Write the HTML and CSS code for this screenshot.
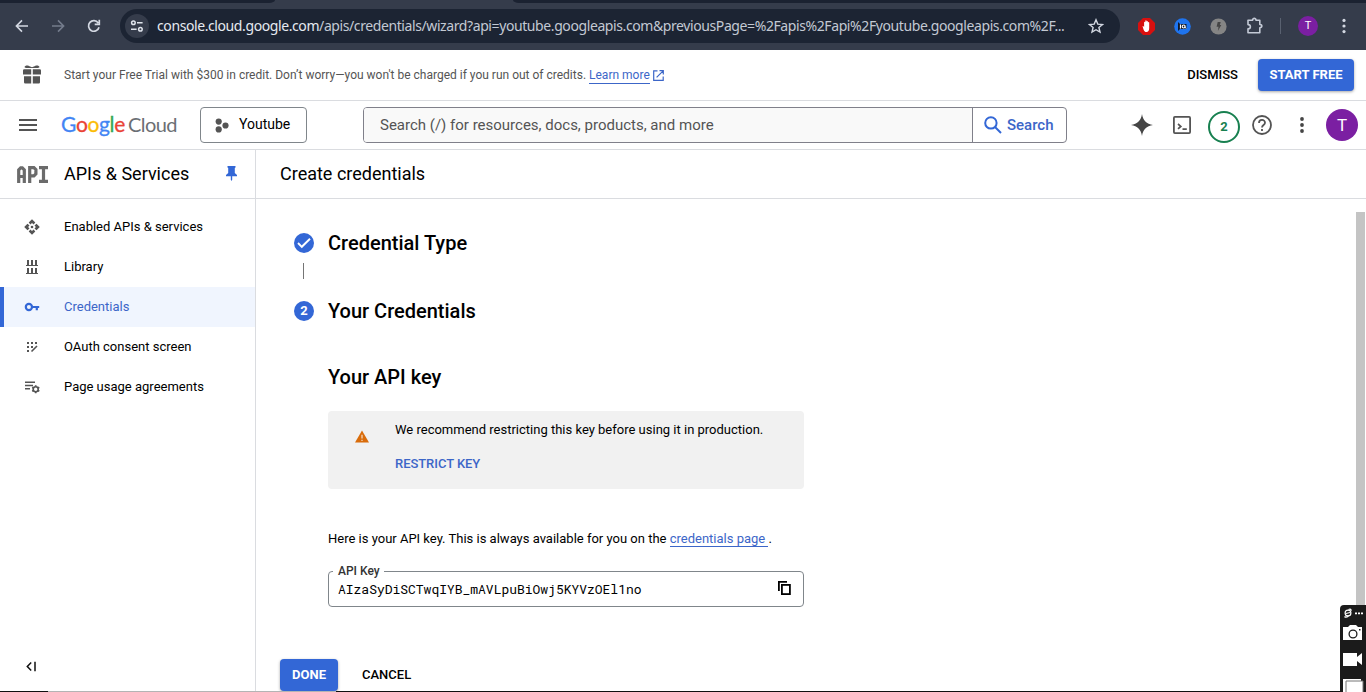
FILE: index.html
```html
<!DOCTYPE html>
<html lang="en">
<head>
<meta charset="utf-8">
<title>Create credentials – APIs &amp; Services</title>
<link rel="stylesheet" href="styles.css">
</head>
<body>
<div class="browser">
  <div class="tabs"><div class="tabs-left"></div><div class="tabs-right"></div></div>
  <div class="toolbar">
    <svg class="nav-back" width="16" height="16" viewBox="0 0 16 16" fill="none" stroke="#d3d8e2" stroke-width="1.6"><path d="M14 8H2.6M8 2.4 2.4 8 8 13.6"/></svg>
    <svg class="nav-fwd" width="16" height="16" viewBox="0 0 16 16" fill="none" stroke="#747c8c" stroke-width="1.6"><path d="M2 8h11.4M8 2.4 13.6 8 8 13.6"/></svg>
    <svg class="nav-reload" width="16" height="16" viewBox="0 0 16 16" fill="none" stroke="#d3d8e2" stroke-width="1.7"><path d="M13 9.2A5.3 5.3 0 1 1 12.2 4.9M13.3 1.8v4.6H8.7"/></svg>
    <div class="omnibox">
      <span class="site-info"><svg width="14" height="12" viewBox="0 0 14 12" fill="none" stroke="#dfe4ec" stroke-width="1.5"><circle cx="3.4" cy="2.8" r="1.8"/><path d="M7 2.8h5.6M1 9.2h5.6"/><circle cx="10.4" cy="9.2" r="1.8"/></svg></span>
      <span class="url"><b>console.cloud.google.com</b>/apis/credentials/wizard?api=youtube.googleapis.com&amp;previousPage=%2Fapis%2Fapi%2Fyoutube.googleapis.com%2F...</span>
      <svg class="star" width="16" height="16" viewBox="0 0 16 16" fill="none" stroke="#d3d8e2" stroke-width="1.4"><path d="m8 1.8 1.8 4.3 4.7.4-3.6 3 1.1 4.6L8 11.7l-4 2.4 1.1-4.6-3.6-3 4.7-.4z"/></svg>
    </div>
    <div class="extensions">
      <svg width="17" height="17" viewBox="0 0 17 17"><path d="M5 0h7l5 5v7l-5 5H5l-5-5V5z" fill="#d8100f"/><path d="M4.6 8.2c.6-.3 1 .3 1.5 1V4.3c0-.9 1.2-.9 1.2 0V3c0-.9 1.3-.9 1.3 0v.7c0-.9 1.3-.9 1.3 0v.9c0-.9 1.3-.9 1.3 0V10c0 2.5-1 4-2.8 4-2 0-2.7-1.6-3.8-5.8z" fill="#fff"/></svg>
      <svg width="17" height="17" viewBox="0 0 17 17"><circle cx="8.5" cy="8.5" r="8.3" fill="#1f74ee"/><path d="m4 4 2 2h6.5v5H6l-2 2z" fill="#101828"/><path d="M6.5 6.5v4" stroke="#fff" stroke-width="1.2"/><circle cx="9.7" cy="8.5" r="1.5" fill="none" stroke="#fff" stroke-width="1.1"/><path d="m10 8.7 2.3 1.7" stroke="#fff"/></svg>
      <svg width="17" height="17" viewBox="0 0 17 17"><circle cx="8.5" cy="8.5" r="8.1" fill="#858585"/><path d="M7.7 4h3L9.8 7h1.5l-3.4 6 .6-4.3H6.6z" fill="#454545"/></svg>
      <svg width="18" height="18" viewBox="0 0 18 18" fill="none" stroke="#c4cad6" stroke-width="1.6"><path d="M2 3.2h4.6C6.6.8 10 .8 10 3.2h3.8v4.3c2.7 0 2.7 3.2 0 3.2v5H2v-3.8c3.2 0 3.2-4.3 0-4.3z" stroke-linejoin="round"/></svg>
      <i class="ext-divider"></i>
      <span class="mini-avatar">T</span>
      <svg class="chrome-menu" width="4" height="16" viewBox="0 0 4 16" fill="#d3d8e2"><circle cx="2" cy="2.4" r="1.6"/><circle cx="2" cy="8" r="1.6"/><circle cx="2" cy="13.6" r="1.6"/></svg>
    </div>
  </div>
</div>

<div class="promo">
  <svg class="gift" width="18" height="19" viewBox="0 0 18 19" fill="#545454"><path d="M1.5 2.2c0-1.5 3-2 4.4-1.2L9 2.2 12.100 1c1.400-.8 4.400-.3 4.400 1.200L15 3H3z"/><path d="M1.200 4.200H8.200V9.600H0V5.400q0-1.200 1.200-1.200zM9.800 4.200h7q1.200 0 1.200 1.200V9.600H9.800zM1 11.200h7.200V18.500H2.200Q1 18.500 1 17.300zM9.800 11.200H17v6.100q0 1.200-1.200 1.200h-6z"/></svg>
  <span class="promo-text">Start your Free Trial with $300 in credit. Don’t worry—you won't be charged if you run out of credits. <a>Learn more</a></span>
  <svg class="ext-link" width="11" height="11" viewBox="0 0 11 11" fill="none" stroke="#3c66c8" stroke-width="1.200"><path d="M4.500.9H.7v9.500h9.500V6.500M6.500.7h3.800v3.800M10.200.8 3.600 7.400"/></svg>
  <span class="dismiss">DISMISS</span>
  <span class="btn start">START FREE</span>
</div>

<header class="header">
  <i class="menu"><i></i></i>
  <div class="logo"><span class="google"><span class="b">G</span><span class="r">o</span><span class="y">o</span><span class="b">g</span><span class="g">l</span><span class="r">e</span></span><span class="cloud">Cloud</span></div>
  <div class="project"><svg width="14" height="15" viewBox="0 0 14 15" fill="#545454"><circle cx="3.700" cy="3.600" r="3.100"/><circle cx="3.700" cy="11.400" r="3.100"/><circle cx="10.500" cy="7.500" r="3.100"/></svg><span>Youtube</span></div>
  <div class="search">
    <div class="search-input">Search (/) for resources, docs, products, and more</div>
    <div class="search-btn"><svg width="18" height="18" viewBox="0 0 18 18" fill="none" stroke="#3367d6" stroke-width="2"><circle cx="6.900" cy="6.900" r="5.700"/><path d="m11 11 6 6"/></svg><span>Search</span></div>
  </div>
  <div class="tools">
    <svg width="22" height="22" viewBox="0 0 22 22" fill="#454545"><path d="M11 0c.9 6.500 4.500 10.100 11 11-6.500.9-10.100 4.500-11 11-.9-6.500-4.500-10.100-11-11 6.500-.9 10.100-4.500 11-11z"/></svg>
    <svg class="shell" width="18" height="18" viewBox="0 0 18 18" fill="none" stroke="#545454" stroke-width="1.800"><rect x=".9" y=".9" width="16.200" height="16.200" rx="1"/><path d="m5 8 2.800 2.400L5 12.900M9.500 13.100h4.300" stroke-width="1.700"/></svg>
    <span class="notify">2</span>
    <svg class="help" width="20" height="20" viewBox="0 0 20 20" fill="none" stroke="#545454" stroke-width="1.800"><circle cx="10" cy="10" r="9"/><path d="M7 8c0-4 6-4 6-.3 0 2.200-3 2.300-3 4.700M10 14v2"/></svg>
    <svg class="dots" width="4" height="16" viewBox="0 0 4 16" fill="#454545"><circle cx="2" cy="2" r="1.900"/><circle cx="2" cy="8" r="1.900"/><circle cx="2" cy="14" r="1.900"/></svg>
    <span class="avatar">T</span>
  </div>
</header>

<div class="layout">
  <nav class="sidebar">
    <div class="product">
      <svg class="api" width="31" height="17" viewBox="0 0 31 17" fill="none" stroke="#6b6b6b" stroke-width="3.200"><path d="M1.700 17V3.800l2-2h1.600l2 2V17M1.700 10.500h5.600M12.700 17V1.700h4.200l2 2v4.100l-2 2h-4.200M22 1.700h9M22 15.300h9M26.500 1v15"/></svg>
      <span>APIs &amp; Services</span>
      <svg class="pin" width="11" height="15" viewBox="0 0 11 15" fill="#3367d6"><path d="M1.500 0h8v1.500l-.7.500v5L11 9v1.200H6.200v3.600L5.500 15l-.7-1.200v-3.600H0V9l2.200-2V2l-.7-.5z"/></svg>
    </div>
    <ul class="items">
      <li><svg width="16" height="16" viewBox="0 0 16 16" fill="#545454"><path d="m8 .2 3.300 3.300-1.700 2L8 4.100 6.400 5.500 4.700 3.500zM8 15.800l3.300-3.300-1.700-2L8 11.900l-1.600-1.400-1.700 2zM.2 8l3.300-3.300 2 1.700L4.100 8l1.400 1.600-2 1.700zM15.800 8l-3.300-3.300-2 1.700L11.900 8l-1.400 1.600 2 1.700z"/><circle cx="8" cy="8" r="1.300"/></svg>Enabled APIs &amp; services</li>
      <li><svg width="16" height="16" viewBox="0 0 16 16" fill="none" stroke="#545454"><path d="M2 6.500h12M2 14.500h12" stroke-width="1"/><path d="M4 1v5.500M8 1v5.500M12 1v5.500M4 9v5.500M8 9v5.500M12 9v5.500" stroke-width="2"/></svg>Library</li>
      <li class="active"><svg width="16" height="16" viewBox="0 0 16 16" fill="none" stroke="#3367d6" stroke-width="2.200"><circle cx="4.900" cy="8" r="3.100"/><path d="M7.500 8H15.200M12.800 8v3.300"/></svg>Credentials</li>
      <li><svg width="16" height="16" viewBox="0 0 16 16" fill="#545454"><path d="M3 3h2v2H3zM7 3h2v2H7zM11 3h2v2h-2zM3 7h2v2H3zM7 7h2v2H7zM3 11h2v2H3z"/><path d="m7.500 12.500 5.500-5.500" stroke="#545454" stroke-width="1.600"/></svg>OAuth consent screen</li>
      <li><svg width="16" height="16" viewBox="0 0 16 16" fill="none" stroke="#545454" stroke-width="1.500"><path d="M1 3.200h10M1 6.500h8M1 9.800h5"/><circle cx="11.700" cy="10.200" r="2.500" stroke-width="1.600"/><path d="M11.700 6.200v1.300M11.700 13v1.300M8.200 8.200l1.200.7M14.100 11.500l1.200.7M8.200 12.200l1.200-.7M14.100 8.900l1.200-.7" stroke-width="1.700"/></svg>Page usage agreements</li>
    </ul>
    <svg class="collapse" width="11" height="11" viewBox="0 0 11 11" fill="none" stroke="#111" stroke-width="1.500"><path d="M5.200 1.500 1.300 5.500l3.900 4M9 .8v9.400"/></svg>
  </nav>
  <main class="main">
    <div class="page-title">Create credentials</div>
    <div class="content">
      <div class="step"><span class="badge"><svg width="14" height="12" viewBox="0 0 14 12" fill="none" stroke="#fff" stroke-width="1.900"><path d="m1 6 3.800 3.800L13 1.700"/></svg></span><h2>Credential Type</h2></div>
      <div class="connector"></div>
      <div class="step"><span class="badge">2</span><h2>Your Credentials</h2></div>
      <div class="panel">
        <h2>Your API key</h2>
        <div class="warning">
          <svg width="14" height="13" viewBox="0 0 14 13"><path d="M7 .4 14 12.600H0z" fill="#d96c0b"/><path d="M7 4.800v3.700M7 9.700v1.300" stroke="#f5dfcb" stroke-width="1.200"/></svg>
          <div><p>We recommend restricting this key before using it in production.</p><a class="restrict">RESTRICT KEY</a></div>
        </div>
        <p class="hint">Here is your API key. This is always available for you on the <a>credentials page&nbsp;</a>.</p>
        <fieldset class="key"><legend>API Key</legend><div class="key-row"><code>AIzaSyDiSCTwqIYB_mAVLpuBiOwj5KYVzOEl1no</code><svg width="13" height="14" viewBox="0 0 13 14" fill="none" stroke="#000" stroke-width="1.800"><path d="M.9 10V.9H9"/><rect x="3.900" y="3.900" width="8" height="9.200"/></svg></div></fieldset>
      </div>
      <div class="actions"><span class="btn done">DONE</span><span class="cancel">CANCEL</span></div>
    </div>
  </main>
</div>
<div class="scrollbar"></div>
<div class="taskline"><i></i></div>
<div class="recorder">
  <svg width="26" height="87" viewBox="0 0 26 87"><path d="M0 4q0-4 4-4h22v87H0z" fill="#1b1b1b"/><g fill="none" stroke="#fff" stroke-width="1.200"><circle cx="8" cy="8" r="2.900"/><path d="M4.500 11.500c1 1 3 .3 4-.5M6 8.500l4-1M8.500 4.500q3-1 2.500 1.500"/></g><path d="M15 7.500h2v1.800h-2zM18 7.500h2v1.800h-2zM21 7.500h2v1.800h-2z" fill="#fff"/><path d="M3 22h5l2-2h6l2 2h4v13H3z" fill="#fff"/><circle cx="13" cy="29" r="3.900" fill="none" stroke="#1b1b1b" stroke-width="1.300"/><path d="M19 24h1.500v1.500H19z" fill="#1b1b1b"/><path d="M3 48h14v4l5-4v12l-5-4v5H3z" fill="#fff"/><path d="M3 74h18v13H3z" fill="#fff"/><path d="M6 87V76h17v11" fill="#fff" stroke="#777"/></svg>
</div>
</body>
</html>
```

FILE: styles.css
```css
* { box-sizing: border-box; }
body { margin: 0; width: 1366px; height: 692px; overflow: hidden; position: relative; background: #fff; color: #000; font: 13px/20px Roboto, "Liberation Sans", sans-serif; display: flex; flex-direction: column; }
svg { flex: none; display: block; }
h2, p { margin: 0; }
.btn { display: flex; align-items: center; justify-content: center; height: 32px; border-radius: 4px; background: #3367d6; color: #fff; font-weight: 700; box-shadow: 0 1px 3px rgba(0, 0, 0, .35); }

.browser { height: 50px; flex: none; background: #353c4b; }
.tabs { height: 3px; display: flex; justify-content: space-between; }
.tabs-left { width: 275px; background: #1b2231; border-bottom-right-radius: 6px 3px; }
.tabs-right { width: 853px; background: #1b2231; border-bottom-left-radius: 6px 3px; }
.toolbar { height: 47px; display: flex; align-items: center; background: #353c4b; padding-bottom: 1px; }
.nav-back { margin-left: 14px; }
.nav-fwd { margin-left: 20px; }
.nav-reload { margin-left: 20px; }
.omnibox { width: 1000px; height: 34px; margin-left: 18px; border-radius: 17px; background: #1c2433; display: flex; align-items: center; }
.site-info { width: 24px; height: 24px; margin: 0 8px 0 5px; border-radius: 50%; background: #353c4b; display: flex; align-items: center; justify-content: center; }
.url { width: 915px; font: 14px/20px "Noto Sans", sans-serif; letter-spacing: -.405px; color: #c3c9d3; white-space: nowrap; }
.url b { font-weight: 400; color: #e6eaf1; }
.star { margin-left: 16px; }
.extensions { display: flex; align-items: center; margin-left: 18px; }
.extensions svg { margin-right: 19px; }
.ext-divider { width: 1px; height: 16px; background: #596170; margin: 0 17px 0 -3px; }
.mini-avatar { width: 20px; height: 20px; border-radius: 50%; background: #7b1fa2; color: #fff; font-size: 11px; text-align: center; }
.extensions .chrome-menu { margin: 0 0 0 24px; }

.promo { height: 51px; flex: none; display: flex; align-items: center; padding-right: 12px; border-bottom: 1px solid #dadce0; }
.gift { margin: -2px 23px 0 23px; }
.promo-text { font-size: 12px; color: #545454; white-space: nowrap; }
a { color: #3c66c8; }
.promo-text a { border-bottom: 1px solid #3c66c8; padding-bottom: 1px; }
.ext-link { margin-left: 3px; }
.dismiss { margin-left: auto; font-weight: 500; }
.start { width: 96px; margin-left: 20px; }

.header { height: 49px; flex: none; display: flex; align-items: center; border-bottom: 1px solid #dadce0; }
.menu { width: 18px; height: 12px; margin-left: 19px; border: solid #545454; border-width: 2px 0; display: flex; align-items: center; }
.menu i { width: 18px; height: 2px; background: #545454; }
.logo { width: 139px; margin-left: 24px; padding-bottom: 2px; display: flex; align-items: baseline; font: 21px/24px Lato, sans-serif; }
.google { width: 67px; letter-spacing: -.35px; -webkit-text-stroke: .3px; }
.cloud { color: #6b6f74; font-size: 20px; letter-spacing: -.55px; }
.b { color: #4285f4; } .r { color: #ea4335; } .y { color: #fbbc04; } .g { color: #34a853; }
.project { width: 107px; height: 36px; padding-left: 14px; border: 1px solid #80868b; border-radius: 4px; display: flex; align-items: center; gap: 10px; font-size: 14px; }
.project span { margin-top: -2px; }
.search { width: 704px; height: 36px; margin-left: 56px; display: flex; border: 1px solid #80808a; border-radius: 4px; overflow: hidden; }
.search-input { width: 609px; padding-left: 16px; font-size: 15px; line-height: 34px; color: #545454; background: #f9f9f9; border-right: 1px solid #80808a; }
.search-btn { flex: 1; padding-left: 11px; display: flex; align-items: center; gap: 5px; font-size: 15px; font-weight: 500; color: #3c66c8; }
.tools { display: flex; align-items: center; margin-left: 64px; }
.shell { margin-left: 20px; }
.notify { width: 32px; height: 32px; margin: 3px 0 0 17px; border: 2px solid #188050; border-radius: 50%; color: #188050; font-weight: 700; text-align: center; line-height: 28px; }
.help { margin-left: 12px; }
.dots { margin-left: 28px; }
.avatar { width: 32px; height: 32px; margin-left: 22px; border-radius: 50%; background: #7b1fa2; color: #fff; font-size: 17px; line-height: 32px; text-align: center; }

.layout { flex: 1; min-height: 0; display: flex; }
.sidebar { width: 256px; border-right: 1px solid #dadce0; display: flex; flex-direction: column; }
.product { height: 49px; flex: none; border-bottom: 1px solid #dadce0; display: flex; align-items: center; padding: 0 18px 0 17px; font-size: 18px; }
.product span { margin-left: 16px; }
.pin { margin: -1px 0 0 auto; }
.items { list-style: none; margin: 8px 0 0; padding: 0; }
.items li { height: 40px; display: flex; align-items: center; gap: 24px; padding-left: 24px; }
.items .active { background: #f0f5fe; color: #3c66c8; border-left: 4px solid #3367d6; padding-left: 20px; }
.collapse { margin: auto 0 20px 26px; }
.main { flex: 1; display: flex; flex-direction: column; }
.page-title { height: 49px; flex: none; padding-left: 24px; border-bottom: 1px solid #dadce0; font-size: 18px; line-height: 48px; }
.content { padding: 32px 24px 0; }
.step { height: 24px; display: flex; align-items: center; padding-left: 14px; gap: 14px; }
h2 { font-size: 20px; line-height: 24px; font-weight: 500; }
.badge { width: 20px; height: 20px; border-radius: 50%; background: #3367d6; color: #fff; display: flex; align-items: center; justify-content: center; font-weight: 700; }
.connector { width: 1px; height: 16px; margin: 8px 0 20px 23px; background: #757575; }
.panel { width: 476px; margin: 42px 0 0 48px; }
.warning { height: 78px; margin-top: 22px; padding: 9px 0 0 27px; border-radius: 4px; background: #f1f1f1; display: flex; gap: 26px; }
.warning svg { margin-top: 10px; }
.restrict { display: block; margin-top: 14px; font-weight: 500; letter-spacing: -.05px; }
.hint { margin-top: 40px; }
.hint a { border-bottom: 1px solid #3c66c8; }
.key { height: 43px; margin: 15px 0 0; padding: 0 12px 0 9px; border: 1px solid #80868b; border-radius: 4px; }
.key legend { padding: 0 4px 0 5px; margin-left: -5px; font-size: 12px; line-height: 15px; font-weight: 500; color: #333; }
.key-row { height: 20px; display: flex; align-items: center; justify-content: space-between; }
.key code { font: 13px/20px "Roboto Mono", "DejaVu Sans Mono", monospace; letter-spacing: -.02px; }
.key svg { margin-top: -2px; }
.actions { display: flex; align-items: center; gap: 24px; margin-top: 52px; }
.done { width: 58px; }
.cancel { font-weight: 500; }

.scrollbar { position: absolute; left: 1356px; top: 212px; width: 9px; height: 480px; background: #c4c4c4; }
.taskline { position: absolute; left: 0; top: 691px; width: 1366px; height: 1px; background: #111; }
.taskline i { display: block; width: 288px; height: 1px; margin-left: 48px; background: #b4b4b4; }
.recorder { position: absolute; left: 1340px; top: 605px; }
```
